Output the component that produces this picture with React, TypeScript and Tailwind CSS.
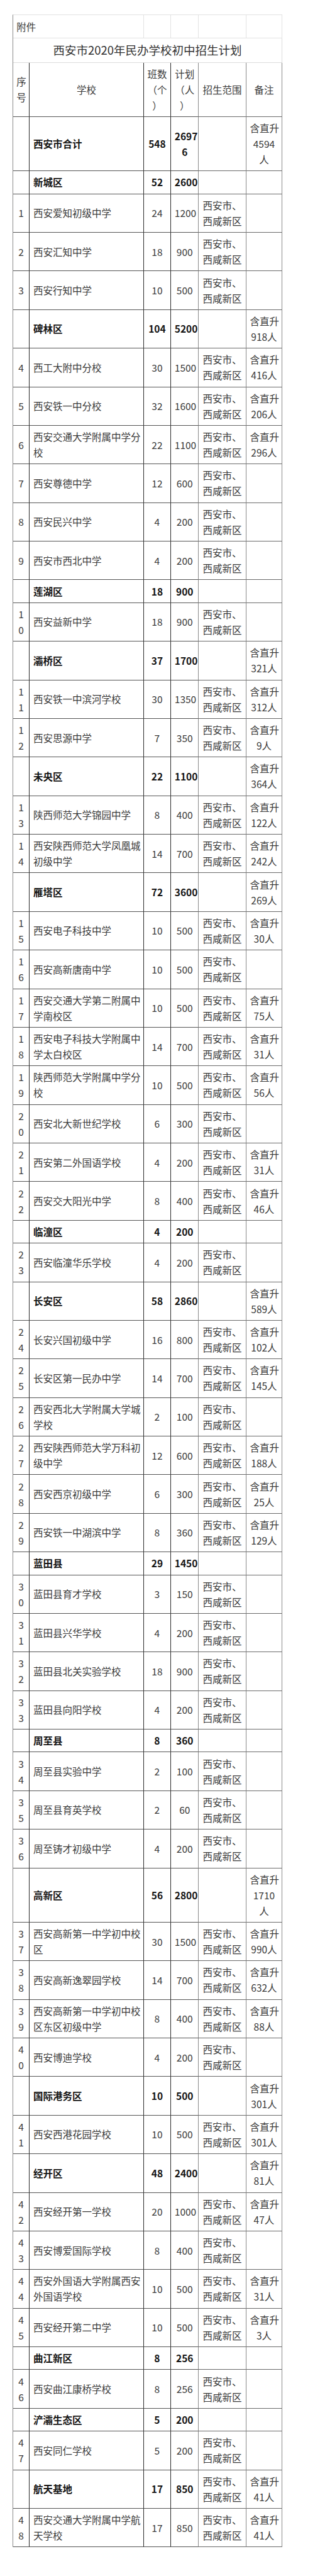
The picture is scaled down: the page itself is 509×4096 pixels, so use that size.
type Row = {
  no: string[];
  name: string[];
  classes: string[];
  plan: string[];
  range: boolean;
  note: string[];
  bold: boolean;
};

const school = (no: number, name: string, classes: string, plan: string, note?: string): Row => ({
  no: String(no).split(""),
  name: name.split("/"),
  classes: [classes],
  plan: [plan],
  range: true,
  note: note ? ["含直升", ...note.split("/")] : [],
  bold: false,
});

const district = (name: string, classes: string, plan: string, note?: string, range = false): Row => ({
  no: [],
  name: [name],
  classes: [classes],
  plan: plan.split("/"),
  range,
  note: note ? ["含直升", ...note.split("/")] : [],
  bold: true,
});

const rows: Row[] = [
  district("西安市合计", "548", "2697/6", "4594/人"),
  district("新城区", "52", "2600"),
  school(1, "西安爱知初级中学", "24", "1200"),
  school(2, "西安汇知中学", "18", "900"),
  school(3, "西安行知中学", "10", "500"),
  district("碑林区", "104", "5200", "918人"),
  school(4, "西工大附中分校", "30", "1500", "416人"),
  school(5, "西安铁一中分校", "32", "1600", "206人"),
  school(6, "西安交通大学附属中学分/校", "22", "1100", "296人"),
  school(7, "西安尊德中学", "12", "600"),
  school(8, "西安民兴中学", "4", "200"),
  school(9, "西安市西北中学", "4", "200"),
  district("莲湖区", "18", "900"),
  school(10, "西安益新中学", "18", "900"),
  district("灞桥区", "37", "1700", "321人"),
  school(11, "西安铁一中滨河学校", "30", "1350", "312人"),
  school(12, "西安思源中学", "7", "350", "9人"),
  district("未央区", "22", "1100", "364人"),
  school(13, "陕西师范大学锦园中学", "8", "400", "122人"),
  school(14, "西安陕西师范大学凤凰城/初级中学", "14", "700", "242人"),
  district("雁塔区", "72", "3600", "269人"),
  school(15, "西安电子科技中学", "10", "500", "30人"),
  school(16, "西安高新唐南中学", "10", "500"),
  school(17, "西安交通大学第二附属中/学南校区", "10", "500", "75人"),
  school(18, "西安电子科技大学附属中/学太白校区", "14", "700", "31人"),
  school(19, "陕西师范大学附属中学分/校", "10", "500", "56人"),
  school(20, "西安北大新世纪学校", "6", "300"),
  school(21, "西安第二外国语学校", "4", "200", "31人"),
  school(22, "西安交大阳光中学", "8", "400", "46人"),
  district("临潼区", "4", "200"),
  school(23, "西安临潼华乐学校", "4", "200"),
  district("长安区", "58", "2860", "589人"),
  school(24, "长安兴国初级中学", "16", "800", "102人"),
  school(25, "长安区第一民办中学", "14", "700", "145人"),
  school(26, "西安西北大学附属大学城/学校", "2", "100"),
  school(27, "西安陕西师范大学万科初/级中学", "12", "600", "188人"),
  school(28, "西安西京初级中学", "6", "300", "25人"),
  school(29, "西安铁一中湖滨中学", "8", "360", "129人"),
  district("蓝田县", "29", "1450"),
  school(30, "蓝田县育才学校", "3", "150"),
  school(31, "蓝田县兴华学校", "4", "200"),
  school(32, "蓝田县北关实验学校", "18", "900"),
  school(33, "蓝田县向阳学校", "4", "200"),
  district("周至县", "8", "360"),
  school(34, "周至县实验中学", "2", "100"),
  school(35, "周至县育英学校", "2", "60"),
  school(36, "周至铸才初级中学", "4", "200"),
  district("高新区", "56", "2800", "1710/人"),
  school(37, "西安高新第一中学初中校/区", "30", "1500", "990人"),
  school(38, "西安高新逸翠园学校", "14", "700", "632人"),
  school(39, "西安高新第一中学初中校/区东区初级中学", "8", "400", "88人"),
  school(40, "西安博迪学校", "4", "200"),
  district("国际港务区", "10", "500", "301人"),
  school(41, "西安西港花园学校", "10", "500", "301人"),
  district("经开区", "48", "2400", "81人"),
  school(42, "西安经开第一学校", "20", "1000", "47人"),
  school(43, "西安博爱国际学校", "8", "400"),
  school(44, "西安外国语大学附属西安/外国语学校", "10", "500", "31人"),
  school(45, "西安经开第二中学", "10", "500", "3人"),
  district("曲江新区", "8", "256"),
  school(46, "西安曲江康桥学校", "8", "256"),
  district("浐灞生态区", "5", "200"),
  school(47, "西安同仁学校", "5", "200"),
  district("航天基地", "17", "850", "41人", true),
  school(48, "西安交通大学附属中学航/天学校", "17", "850", "41人"),
];

const cell = "px-[5.6px] py-[5.2px] leading-[25px] align-middle border-b";

function Lines({ items }: { items: string[] }) {
  return (
    <>
      {items.map((t, i) => (
        <div key={i} className="whitespace-nowrap">{t}</div>
      ))}
    </>
  );
}

export default function App() {
  return (
    <div className="min-h-[4096px] bg-white pt-[23.4px] pl-[19.7px] font-['Noto_Sans_CJK_SC',sans-serif] text-[15.5px] text-[#3a3a3a]">
      <table className="table-fixed border-separate border-spacing-0 w-[428.5px] border-t border-l border-t-[#e2e2e2] border-l-[#8a8a8a]">
        <colgroup>
          <col className="w-[26.8px]" />
          <col className="w-[181.1px]" />
          <col className="w-[43.6px]" />
          <col className="w-[44.1px]" />
          <col className="w-[75.5px]" />
          <col className="w-[57.4px]" />
        </colgroup>
        <tbody>
          <tr>
            <td colSpan={2} className={`${cell} text-left border-r border-[#e2e2e2]`}>附件</td>
            <td className={`${cell} border-r border-[#e2e2e2]`}></td>
            <td className={`${cell} border-r border-[#e2e2e2]`}></td>
            <td className={`${cell} border-r border-[#e2e2e2]`}></td>
            <td className={`${cell} border-r border-[#e2e2e2]`}></td>
          </tr>
          <tr>
            <td colSpan={6} className="px-[5.6px] py-[5.2px] leading-[27.4px] text-center text-[18.5px] text-[#333] border-b border-r border-[#dcdcdc]">
              西安市2020年民办学校初中招生计划
            </td>
          </tr>
          <tr>
            <td className={`${cell} text-center border-r border-r-[#2a2a2a] border-b-[#555]`}>
              <Lines items={["序", "号"]} />
            </td>
            <td className={`${cell} text-center border-r border-r-[#2a2a2a] border-b-[#555]`}>学校</td>
            <td className={`${cell} text-center border-r border-r-[#2a2a2a] border-b-[#555]`}>
              <Lines items={["班数", "（个", "）"]} />
            </td>
            <td className={`${cell} text-center border-r border-r-[#8a8a8a] border-b-[#555]`}>
              <Lines items={["计划", "（人", "）"]} />
            </td>
            <td className={`${cell} text-center border-r border-r-[#8a8a8a] border-b-[#6a6a6a]`}>招生范围</td>
            <td className={`${cell} text-center border-r border-r-[#8a8a8a] border-b-[#6a6a6a]`}>备注</td>
          </tr>
          {rows.map((r, i) => {
            const strong = r.bold ? "font-bold text-[#151515]" : "";
            return (
              <tr key={i}>
                <td className={`${cell} text-center border-r border-r-[#2a2a2a] border-b-[#555]`}>
                  <Lines items={r.no} />
                </td>
                <td className={`${cell} text-left border-r border-r-[#2a2a2a] border-b-[#555] ${strong}`}>
                  <Lines items={r.name} />
                </td>
                <td className={`${cell} text-center border-r border-r-[#2a2a2a] border-b-[#555] ${strong}`}>
                  <Lines items={r.classes} />
                </td>
                <td className={`${cell} text-center border-r border-r-[#8a8a8a] border-b-[#555] ${strong}`}>
                  <Lines items={r.plan} />
                </td>
                <td className={`${cell} text-center border-r border-r-[#8a8a8a] border-b-[#6a6a6a]`}>
                  {r.range && <Lines items={["西安市、", "西咸新区"]} />}
                </td>
                <td className={`${cell} text-center border-r border-r-[#8a8a8a] border-b-[#6a6a6a]`}>
                  <Lines items={r.note} />
                </td>
              </tr>
            );
          })}
        </tbody>
      </table>
    </div>
  );
}
